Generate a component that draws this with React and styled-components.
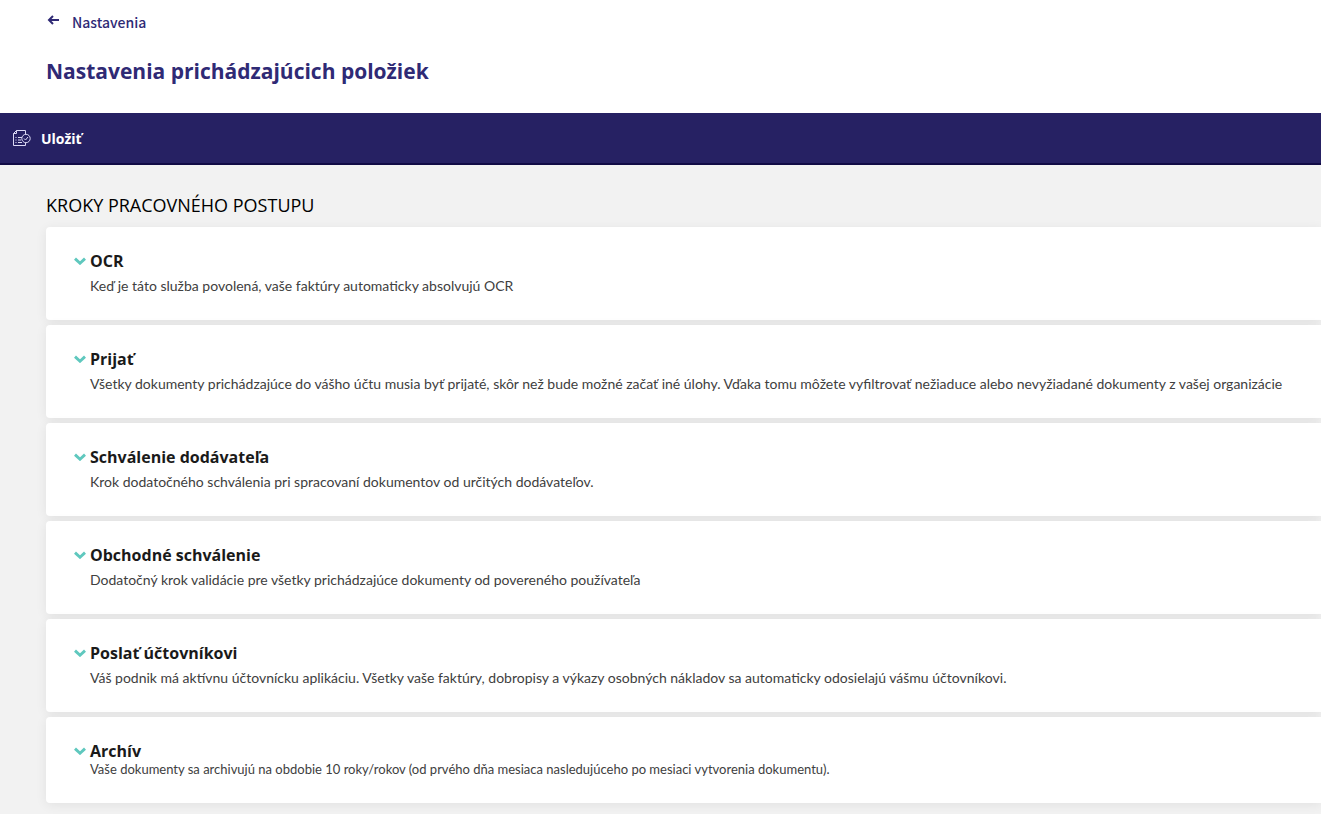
import { useState } from 'react';
import styled, { createGlobalStyle } from 'styled-components';

const GlobalStyle = createGlobalStyle`
  * {
    box-sizing: border-box;
  }

  body {
    margin: 0;
    background: #f2f2f2;
    font-family: Lato, sans-serif;
  }
`;

const Header = styled.header`
  padding: 10px 46px 24px;
  background: #fff;
  color: #2f2a75;
`;

const BackLink = styled.a`
  display: flex;
  align-items: center;
  gap: 12px;
  width: fit-content;
  color: inherit;
  font-family: 'Noto Sans CJK SC', sans-serif;
  font-size: 14px;
  font-weight: 500;
  line-height: 24px;
  text-decoration: none;

  svg {
    margin-bottom: 4px;
  }
`;

const PageTitle = styled.h1`
  margin: 20px 0 0;
  font-family: 'Open Sans', sans-serif;
  font-size: 21px;
  font-weight: 700;
  line-height: 35px;
`;

const Toolbar = styled.div`
  display: flex;
  height: 52px;
  padding: 0 12px;
  background: #262163;
  border-bottom: 2px solid #110b45;
`;

const SaveButton = styled.button`
  display: flex;
  align-items: center;
  gap: 10px;
  padding: 0;
  border: 0;
  background: none;
  color: #fff;
  font-family: 'Open Sans', sans-serif;
  font-size: 14px;
  font-weight: 700;
  cursor: pointer;
`;

const Main = styled.main`
  padding: 28px 0 11px 46px;
`;

const SectionTitle = styled.h2`
  margin: 0 0 10px;
  color: #000;
  font-family: 'Open Sans', sans-serif;
  font-size: 18px;
  font-weight: 400;
  line-height: 24px;
  text-transform: uppercase;
`;

const StepList = styled.div`
  display: flex;
  flex-direction: column;
  gap: 5px;
`;

const StepCard = styled.section`
  padding: 22px 28px 24px;
  background: #fff;
  border-radius: 4px 0 0 4px;
  box-shadow: 0 2px 12px rgba(0, 0, 0, 0.07);
`;

const StepTitle = styled.h3`
  margin: 0;
  line-height: 24px;
`;

const StepButton = styled.button`
  display: flex;
  align-items: center;
  gap: 4px;
  padding: 0;
  border: 0;
  background: none;
  color: #1a1a1a;
  font-family: 'Open Sans', sans-serif;
  font-size: 16px;
  font-weight: 700;
  line-height: 24px;
  cursor: pointer;

  svg {
    transform: ${({ $open }) => ($open ? 'rotate(180deg)' : 'none')};
  }
`;

const StepText = styled.p`
  margin: ${({ $compact }) => ($compact ? '0 0 4px' : '3px 0 0')};
  padding-left: 16px;
  color: #404040;
  font-size: ${({ $compact }) => ($compact ? '13px' : '14px')};
  line-height: ${({ $compact }) => ($compact ? '12px' : '20px')};
`;

const steps = [
  {
    title: 'OCR',
    text: 'Keď je táto služba povolená, vaše faktúry automaticky absolvujú OCR',
  },
  {
    title: 'Prijať',
    text: 'Všetky dokumenty prichádzajúce do vášho účtu musia byť prijaté, skôr než bude možné začať iné úlohy. Vďaka tomu môžete vyfiltrovať nežiaduce alebo nevyžiadané dokumenty z vašej organizácie',
  },
  {
    title: 'Schválenie dodávateľa',
    text: 'Krok dodatočného schválenia pri spracovaní dokumentov od určitých dodávateľov.',
  },
  {
    title: 'Obchodné schválenie',
    text: 'Dodatočný krok validácie pre všetky prichádzajúce dokumenty od povereného používateľa',
  },
  {
    title: 'Poslať účtovníkovi',
    text: 'Váš podnik má aktívnu účtovnícku aplikáciu. Všetky vaše faktúry, dobropisy a výkazy osobných nákladov sa automaticky odosielajú vášmu účtovníkovi.',
  },
  {
    title: 'Archív',
    text: 'Vaše dokumenty sa archivujú na obdobie 10 roky/rokov (od prvého dňa mesiaca nasledujúceho po mesiaci vytvorenia dokumentu).',
    compact: true,
  },
];

function ArrowLeftIcon() {
  return (
    <svg width="14" height="12" viewBox="0 0 14 12" fill="none" aria-hidden="true">
      <path d="M7 2L3 6l4 4M3.5 6H13" stroke="currentColor" strokeWidth="2" />
    </svg>
  );
}

function SaveIcon() {
  return (
    <svg
      width="19"
      height="18"
      viewBox="0 0 19 18"
      fill="none"
      stroke="#dcdaf5"
      aria-hidden="true"
    >
      <path d="M13.5 5V1.5h-9l-3 3v12h12V14M4.5 1.5v3h-3" />
      <path d="M3.5 8.5h1M6 8.5h4M3.5 11h1M6 11h3M3.5 13.5h1M6 13.5h4" />
      <circle cx="14" cy="9.5" r="4.2" />
      <path d="M12 9.5l1.5 1.5 2.5-3" />
    </svg>
  );
}

function ChevronIcon() {
  return (
    <svg width="12" height="8" viewBox="0 0 12 8" fill="none" aria-hidden="true">
      <path d="M1 1.6L6 6.2l5-4.6" stroke="#5fc8be" strokeWidth="2.9" />
    </svg>
  );
}

function Step({ title, text, compact }) {
  const [open, setOpen] = useState(false);

  return (
    <StepCard>
      <StepTitle>
        <StepButton
          type="button"
          $open={open}
          aria-expanded={open}
          onClick={() => setOpen(!open)}
        >
          <ChevronIcon />
          {title}
        </StepButton>
      </StepTitle>
      <StepText $compact={compact}>{text}</StepText>
    </StepCard>
  );
}

export default function App() {
  return (
    <>
      <GlobalStyle />
      <Header>
        <BackLink href="#settings">
          <ArrowLeftIcon />
          Nastavenia
        </BackLink>
        <PageTitle>Nastavenia prichádzajúcich položiek</PageTitle>
      </Header>
      <Toolbar>
        <SaveButton type="button">
          <SaveIcon />
          Uložiť
        </SaveButton>
      </Toolbar>
      <Main>
        <SectionTitle>Kroky pracovného postupu</SectionTitle>
        <StepList>
          {steps.map((step) => (
            <Step key={step.title} {...step} />
          ))}
        </StepList>
      </Main>
    </>
  );
}
